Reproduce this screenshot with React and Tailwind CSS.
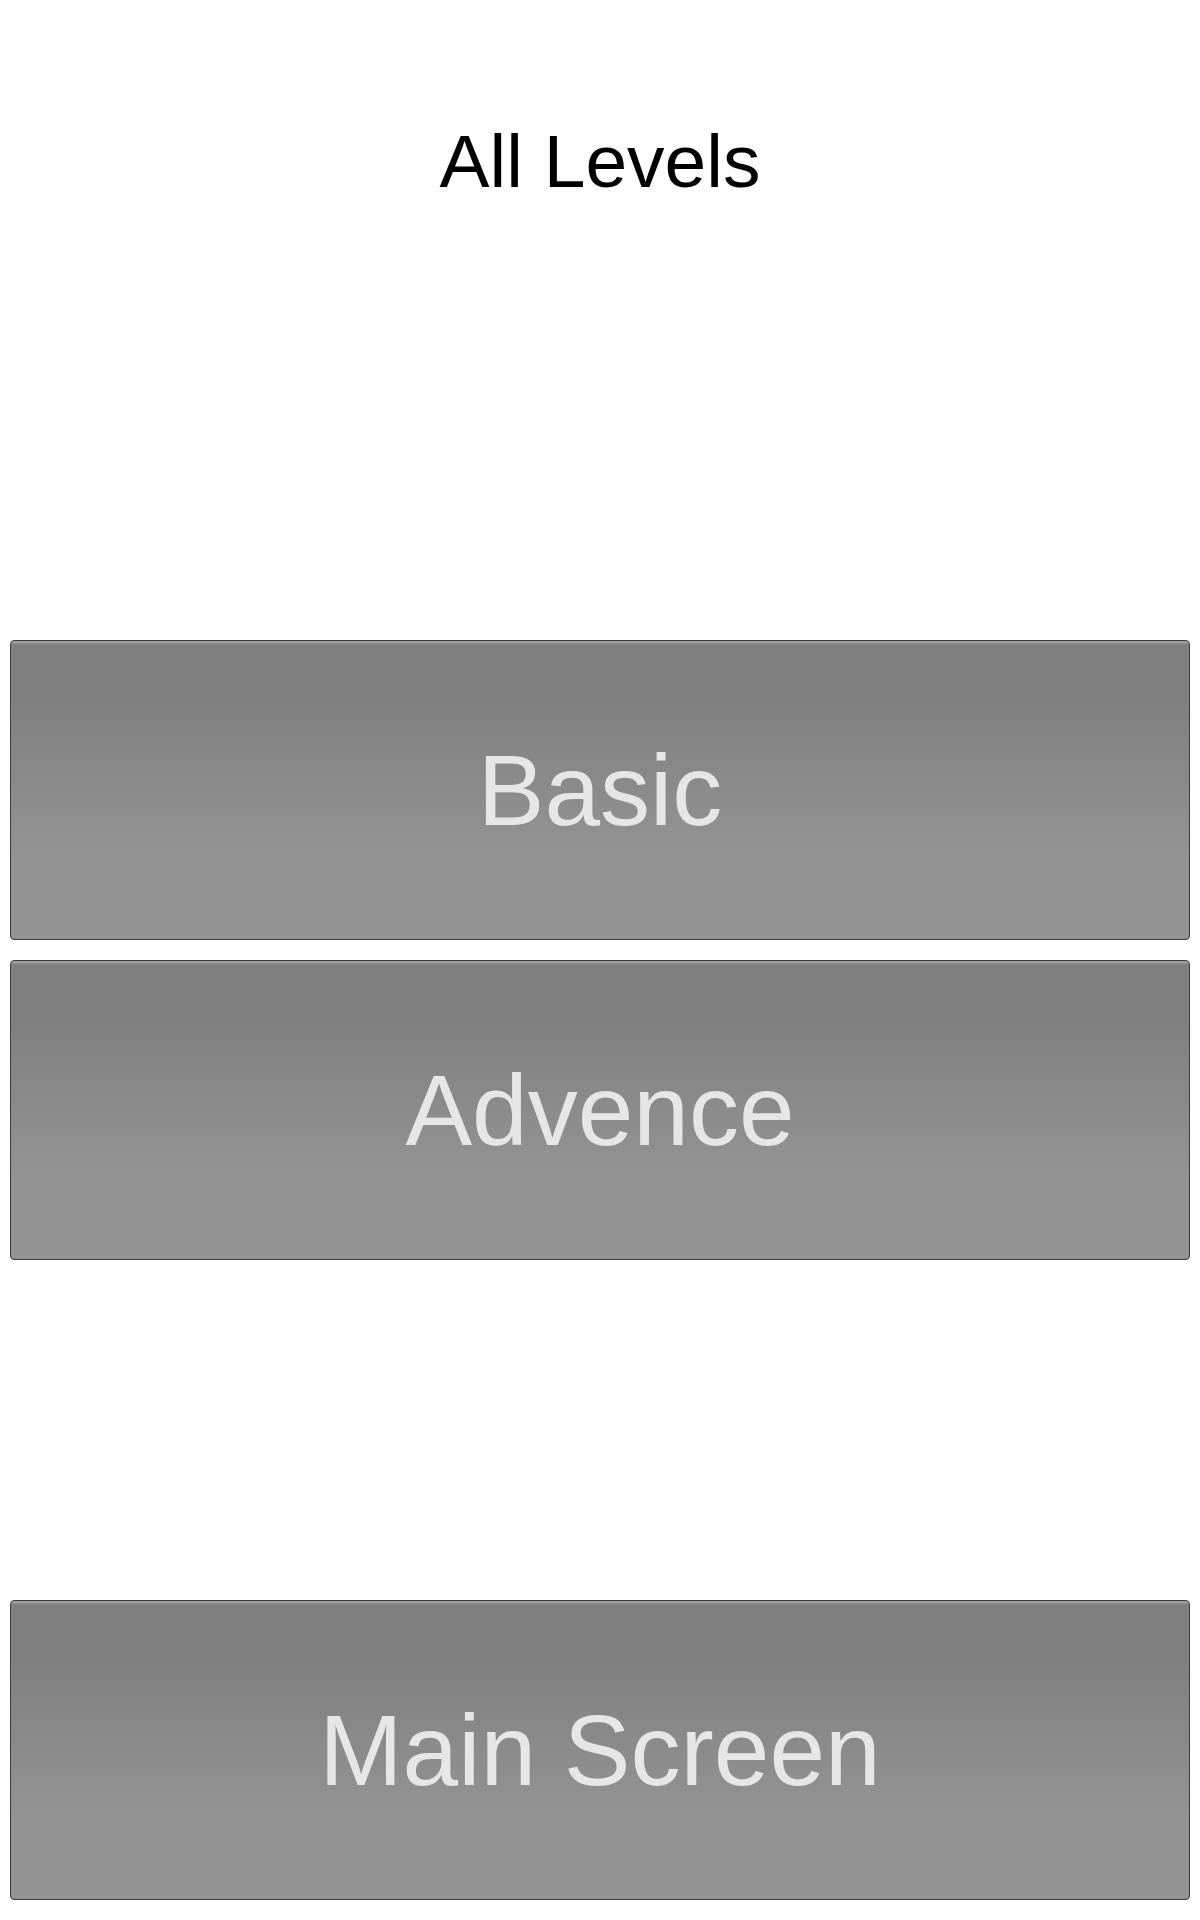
import React from 'react';

function LevelButton({ label, className = '' }) {
    return (
        <button
            className={
                'flex h-[300px] w-full items-center justify-center rounded-[4px] border border-[#3a3a3a] ' +
                'bg-[linear-gradient(to_bottom,#9c9c9c_0px,#9c9c9c_2px,#808080_3px,#808080_20%,#939393_72%,#939393_100%)] ' +
                className
            }
        >
            <span className="text-[100px] leading-[normal] text-[#e6e6e6]">{label}</span>
        </button>
    );
}

export default function App() {
    return (
        <div className="min-h-[1920px] w-full bg-white px-[10px] pt-[118px] font-['Liberation_Sans',Arial,sans-serif]">
            <h1 className="h-[84px] text-center text-[75px] leading-[normal] text-black">All Levels</h1>
            <LevelButton label="Basic" className="mt-[438px]" />
            <LevelButton label="Advence" className="mt-[20px]" />
            <LevelButton label="Main Screen" className="mt-[340px]" />
        </div>
    );
}
